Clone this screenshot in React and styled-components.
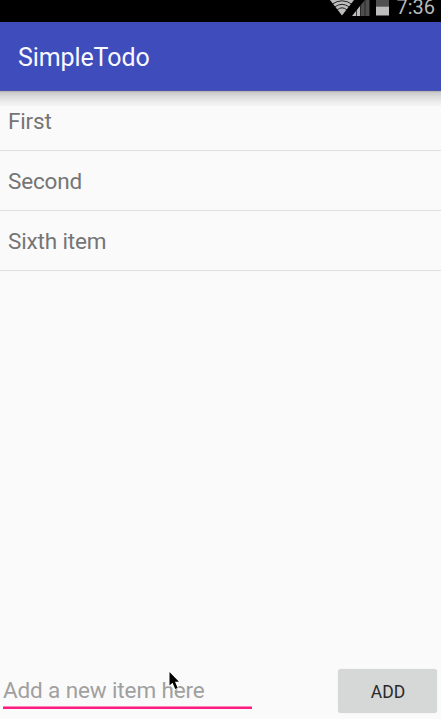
import React from 'react';
import styled, { createGlobalStyle } from 'styled-components';

const GlobalStyle = createGlobalStyle`
  * { box-sizing: border-box; }
  body { margin: 0; background: #fafafa; font-family: Roboto, sans-serif; overflow: hidden; }
`;

const Screen = styled.div`
  position: relative;
  display: flex;
  flex-direction: column;
  width: 441px;
  height: 719px;
  overflow: hidden;
  background: #fafafa;
`;

const StatusBar = styled.div`
  display: flex;
  justify-content: flex-end;
  flex: 0 0 22px;
  height: 22px;
  padding-right: 6px;
  background: #000;
`;

const StatusIcons = styled.svg`
  flex: none;
  width: 66px;
  height: 18px;
`;

const Clock = styled.span`
  color: #b9b9b9;
  font-size: 20px;
  line-height: 14px;
`;

const AppBar = styled.header`
  display: flex;
  align-items: center;
  flex: 0 0 69px;
  padding: 3px 17px 0 18px;
  background: #3f4cbb;
  border-bottom: 1px solid #4b55b0;
`;

const Title = styled.h1`
  margin: 0;
  color: #f8f8ff;
  font-size: 25px;
  font-weight: 400;
  line-height: 30px;
  letter-spacing: -0.1px;
`;

const List = styled.ul`
  flex: 1;
  margin: 0;
  padding: 0;
  list-style: none;
  background: linear-gradient(#b4b4b4 0 1px, #c9c9c9 1px, #d5d5d5 4px, #e3e3e3 8px, #efefef 12px, #f5f5f5 15px, #fafafa 15px) no-repeat 0 0 / 100% 16px;
`;

const Item = styled.li`
  display: flex;
  align-items: center;
  height: 60px;
  padding-left: 8px;
  border-bottom: 1px solid #e0e0e0;
  color: #757575;
  font-size: 22.5px;
  letter-spacing: -0.15px;
`;

const Footer = styled.form`
  display: flex;
  justify-content: space-between;
  flex: 0 0 50px;
  padding: 0 4px 0 3px;
`;

const Field = styled.input`
  width: 249px;
  height: 40px;
  padding: 4px 0 3px;
  border: 0;
  border-radius: 0;
  outline: none;
  background: linear-gradient(#ff86bb 0 1px, #ff1c80 1px) no-repeat 0 100% / 100% 3px;
  font: 22.5px Roboto, sans-serif;
  letter-spacing: -0.13px;

  &::placeholder { color: #a0a0a0; opacity: 1; }
`;

const AddButton = styled.button`
  width: 99px;
  height: 44px;
  padding: 2px 0 0 1px;
  border: 0;
  border-radius: 3px;
  background: #d6d8d7;
  box-shadow: 0 0 1px #d6d8d7;
  color: #2a2a2a;
  font: 17.5px Roboto, sans-serif;
`;

const Pointer = styled.svg`
  position: absolute;
  left: 167px;
  top: 670px;
  width: 15px;
  height: 22px;
`;

const items = ['First', 'Second', 'Sixth item'];

export default function App() {
  return (
    <Screen>
      <GlobalStyle />
      <StatusBar>
        <StatusIcons viewBox="330 0 66 18">
          <path d="M330 0H354L342 15.500Z" fill="#bdbdbd" />
          <g fill="none" stroke="#111" strokeWidth="0.900">
            <path d="M332 4.200Q342-2.600 352 4.200" />
            <path d="M334.500 7.200Q342 1.400 349.500 7.200" />
            <path d="M337 10Q342 5.600 347 10" />
          </g>
          <path d="M352 16L360 6V16Z" fill="#bdbdbd" />
          <path d="M360 6L365 0H369.500V16H360Z" fill="#4e4e4e" />
          <path d="M356.500 10V16M360.500 5V16M365 0V16" stroke="#202020" strokeWidth="0.800" />
          <path d="M376 0H389V6.500H376Z" fill="#505050" />
          <path d="M376 6.500H389V15.500H376Z" fill="#bdbdbd" />
        </StatusIcons>
        <Clock>7:36</Clock>
      </StatusBar>
      <AppBar><Title>SimpleTodo</Title></AppBar>
      <List>{items.map((item) => <Item key={item}>{item}</Item>)}</List>
      <Footer onSubmit={(event) => event.preventDefault()}>
        <Field placeholder="Add a new item here" />
        <AddButton>ADD</AddButton>
      </Footer>
      <Pointer viewBox="0 0 15 22">
        <path d="M2.500 2V15.500L5.500 12.700L8.200 19L10.700 17.900L8 11.800H12Z" fill="#000" stroke="#fff" strokeWidth="1.600" paintOrder="stroke" />
      </Pointer>
    </Screen>
  );
}
